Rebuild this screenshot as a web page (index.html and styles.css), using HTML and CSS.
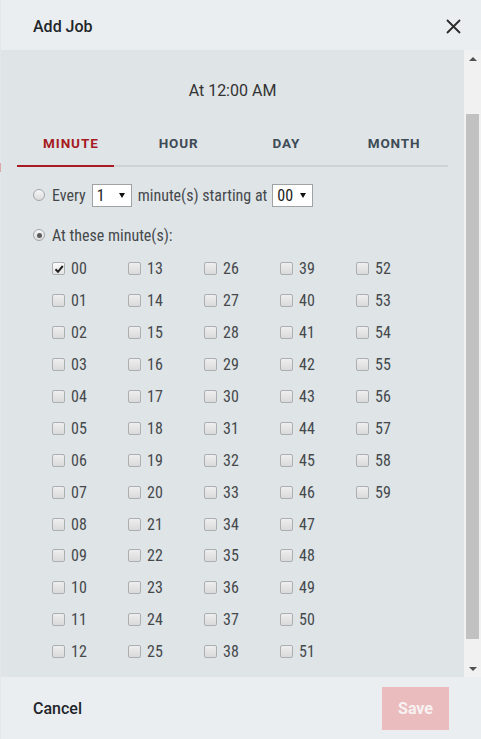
FILE: index.html
```html
<!DOCTYPE html>
<html>
<head>
<meta charset="utf-8">
<title>Add Job</title>
<link rel="stylesheet" href="styles.css">
</head>
<body>
<div class="dialog">
  <div class="header">
    <span class="title">Add Job</span>
    <svg class="close" width="15" height="15" viewBox="0 0 15 15"><path d="M1 1L14 14M14 1L1 14" stroke="#2b2b2b" stroke-width="1.8" fill="none"/></svg>
  </div>
  <div class="main">
    <div class="content">
      <div class="time">At 12:00 AM</div>
      <div class="tabs">
        <div class="tab active">MINUTE</div>
        <div class="tab">HOUR</div>
        <div class="tab">DAY</div>
        <div class="tab">MONTH</div>
      </div>
      <div class="opts">
        <div class="row">
          <span class="radio"></span>
          <span class="lbl">Every</span>
          <span class="select s1"><span>1</span><span class="arrow"></span></span>
          <span class="lbl">minute(s) starting at</span>
          <span class="select s2"><span>00</span><span class="arrow"></span></span>
        </div>
        <div class="row row2">
          <span class="radio on"></span>
          <span class="lbl">At these minute(s):</span>
        </div>
        <div class="grid" id="grid"></div>
      </div>
    </div>
    <div class="scrollbar">
      <div class="sbtn"><span class="up"></span></div>
      <div class="track"><div class="thumb"></div></div>
      <div class="sbtn"><span class="down"></span></div>
    </div>
  </div>
  <div class="footer">
    <span class="cancel">Cancel</span>
    <span class="save">Save</span>
  </div>
</div>
<script>
  var g = document.getElementById('grid');
  for (var i = 0; i < 60; i++) {
    var c = document.createElement('div');
    c.className = 'cell';
    var b = document.createElement('span');
    b.className = 'cb' + (i === 0 ? ' checked' : '');
    if (i === 0) {
      b.innerHTML = '<svg width="10" height="10" viewBox="0 0 10 10"><path d="M1.5 5.2L4 7.8L8.8 2" stroke="#222" stroke-width="2" fill="none"/></svg>';
    }
    var l = document.createElement('span');
    l.className = 'num';
    l.textContent = (i < 10 ? '0' : '') + i;
    c.appendChild(b);
    c.appendChild(l);
    g.appendChild(c);
  }
</script>
</body>
</html>
```
FILE: styles.css
```css
html, body {
  margin: 0;
  padding: 0;
}
body {
  width: 481px;
  height: 739px;
  overflow: hidden;
  background: linear-gradient(to bottom, #e4e7e9 0, #e4e7e9 163px, #dca8aa 163px, #dca8aa 172px, #e4e7e9 172px);
  font-family: Roboto, "Noto Sans", sans-serif;
}
.dialog {
  margin-left: 1px;
  width: 480px;
  height: 739px;
  display: flex;
  flex-direction: column;
}
.header {
  flex: none;
  box-sizing: border-box;
  height: 50px;
  display: flex;
  align-items: center;
  justify-content: space-between;
  padding: 2px 20px 0 32px;
  background: #eaeef1;
}
.title {
  font-size: 16px;
  font-weight: 500;
  color: #212529;
}
.close {
  display: block;
  margin-top: 1px;
}
.main {
  flex: 1;
  display: flex;
  background: #dfe4e7;
  overflow: hidden;
}
.content {
  flex: 1;
  overflow: hidden;
}
.time {
  padding-top: 31px;
  line-height: 20px;
  font-size: 16px;
  text-align: center;
  color: #333;
}
.tabs {
  margin: 20px 16px 0 16px;
  display: flex;
  border-bottom: 2px solid #cdd3d7;
}
.tab {
  flex: 1;
  height: 44px;
  line-height: 44px;
  text-align: center;
  font-size: 13.5px;
  font-weight: 700;
  letter-spacing: 0.9px;
  color: #3d4b56;
  position: relative;
}
.tab.active {
  color: #a61c22;
}
.tab.active::after {
  content: "";
  position: absolute;
  left: 0;
  bottom: -2px;
  width: 97px;
  height: 2px;
  background: #a61c22;
}
.opts {
  padding: 16px 0 0 32px;
  font-family: "Roboto Condensed", Roboto, sans-serif;
  font-size: 16px;
  color: #45494c;
}
.row {
  display: flex;
  align-items: center;
  height: 24px;
}
.row2 {
  margin-top: 16px;
}
.radio {
  flex: none;
  width: 12px;
  height: 12px;
  box-sizing: border-box;
  border-radius: 50%;
  border: 1px solid #a3a6a9;
  background: linear-gradient(#f6f6f6, #dcdcdc);
  margin-right: 7px;
  display: flex;
  align-items: center;
  justify-content: center;
}
.radio.on::after {
  content: "";
  width: 5px;
  height: 5px;
  border-radius: 50%;
  background: #5c5c5c;
}
.select {
  flex: none;
  box-sizing: border-box;
  height: 23px;
  border: 1px solid #9fa3a6;
  background: #fff;
  display: flex;
  align-items: center;
  justify-content: space-between;
  padding: 0 6px 0 4px;
  margin: 0 6px;
  color: #222;
}
.s1 { width: 40px; }
.s2 { width: 41px; padding-left: 4px; padding-right: 6px; margin-left: 5px; }
.arrow {
  width: 0;
  height: 0;
  border-left: 3.5px solid transparent;
  border-right: 3.5px solid transparent;
  border-top: 5px solid #111;
}
.grid {
  margin: 6px 0 0 19px;
  display: grid;
  grid-template-columns: repeat(5, 76px);
  grid-template-rows: repeat(13, 31.9px);
  grid-auto-flow: column;
}
.cell {
  display: flex;
  align-items: center;
}
.cb {
  flex: none;
  width: 13px;
  height: 13px;
  box-sizing: border-box;
  border: 1px solid #acafb2;
  border-radius: 2px;
  background: linear-gradient(#eeeeee, #dadada);
  margin-right: 6px;
  display: flex;
  align-items: center;
  justify-content: center;
}
.cb.checked {
  background: linear-gradient(#fafafa, #e6e6e6);
}
.cb svg { display: block; }
.num {
  line-height: 20px;
  padding-top: 1px;
}
.scrollbar {
  flex: none;
  width: 17px;
  background: #f1f1f1;
  display: flex;
  flex-direction: column;
}
.sbtn {
  flex: none;
  height: 17px;
  display: flex;
  align-items: center;
  justify-content: center;
}
.up {
  width: 0;
  height: 0;
  border-left: 4px solid transparent;
  border-right: 4px solid transparent;
  border-bottom: 4px solid #505050;
}
.down {
  width: 0;
  height: 0;
  border-left: 4px solid transparent;
  border-right: 4px solid transparent;
  border-top: 4px solid #505050;
}
.track {
  flex: 1;
}
.thumb {
  margin: 47px 2px 0 2px;
  height: 525px;
  background: #c1c1c1;
}
.footer {
  flex: none;
  height: 62px;
  display: flex;
  align-items: center;
  justify-content: space-between;
  padding: 0 32px;
  background: #eaeef1;
}
.cancel {
  font-size: 16px;
  font-weight: 500;
  color: #212529;
}
.save {
  width: 67px;
  height: 43px;
  display: flex;
  align-items: center;
  justify-content: center;
  background: #ebbcbe;
  color: #f7f2f2;
  font-size: 16px;
  font-weight: 700;
  margin-top: 1px;
}
```
